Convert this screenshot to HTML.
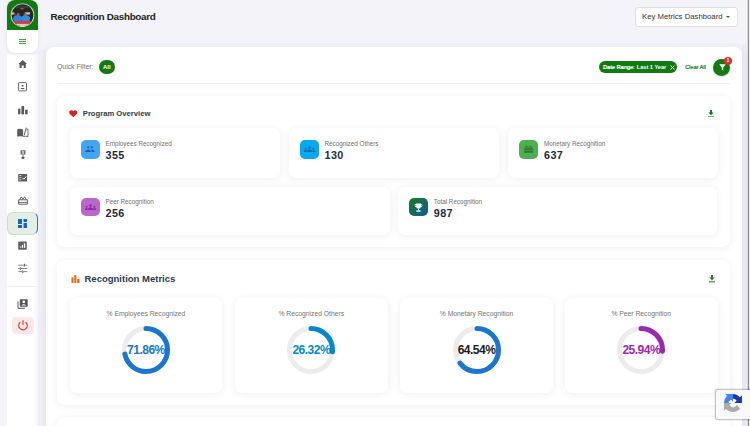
<!DOCTYPE html>
<html><head><meta charset="utf-8">
<style>
*{box-sizing:border-box;margin:0;padding:0}
html,body{width:750px;height:426px;overflow:hidden;background:#f3f3f9;font-family:"Liberation Sans",sans-serif;position:relative}
.a{position:absolute}
.t{position:absolute;white-space:nowrap;line-height:1}
.card{position:absolute;background:#fff;border-radius:8px;box-shadow:0 1px 8px rgba(0,0,0,.07)}
.sc{position:absolute;background:#fff;border-radius:7px;box-shadow:0 1px 8px rgba(0,0,0,.075)}
.ib{position:absolute;width:18.8px;height:18.8px;border-radius:5px;left:11.3px}
.lbl{position:absolute;left:36px;font-size:6.3px;color:#6e6e6e;white-space:nowrap;line-height:1}
.val{position:absolute;left:36px;letter-spacing:.4px;font-size:10.8px;font-weight:700;color:#1f2b3b;white-space:nowrap;line-height:1}
.dc{position:absolute;top:297.7px;width:152.5px;height:95px;background:#fff;border-radius:7px;box-shadow:0 1px 8px rgba(0,0,0,.075)}
.dt{position:absolute;left:0;right:0;top:311px;text-align:center;font-size:6.75px;color:#737373;white-space:nowrap;line-height:1}
.pct{position:absolute;left:0;right:0;text-align:center;letter-spacing:-.5px;font-size:12px;font-weight:700;line-height:1;white-space:nowrap}
.si{position:absolute;left:17px;width:12px;height:12px}
</style></head><body>

<!-- right edge strip -->
<div class="a" style="left:742px;top:44px;width:6px;height:382px;background:#eeedf4"></div>
<div class="a" style="left:747px;top:0;width:1px;height:426px;background:#dcdce2"></div>
<div class="a" style="left:748px;top:0;width:1px;height:426px;background:#8d8d8d"></div>
<div class="a" style="left:749px;top:0;width:1px;height:426px;background:#ebebef"></div>

<!-- header -->
<div class="t" style="left:50.5px;top:11.6px;font-size:9.9px;letter-spacing:-.3px;font-weight:700;color:#222">Recognition Dashboard</div>
<div class="a" style="left:634.9px;top:7px;width:102.8px;height:19.5px;background:#fff;border:1px solid #dedee3;border-radius:3px"></div>
<div class="t" style="left:642px;top:13.2px;font-size:7.75px;color:#333">Key Metrics Dashboard</div>
<div class="a" style="left:726.3px;top:15.8px;width:0;height:0;border-left:2.6px solid transparent;border-right:2.6px solid transparent;border-top:2.9px solid #555"></div>

<!-- sidebar strip shadow -->
<div class="a" style="left:37.5px;top:50px;width:8.5px;height:380px;background:#efeef5"></div>

<!-- sidebar column -->
<div class="a" style="left:7.4px;top:53.5px;width:30.4px;height:380px;background:#fff;box-shadow:inset -3px 0 3px rgba(0,0,0,.035)"></div>

<!-- logo block -->
<div class="a" style="left:7.4px;top:0px;width:30.5px;height:52.5px;background:#fff;border-radius:8px;overflow:hidden;box-shadow:0 1px 4px rgba(0,0,0,.08)">
  <div class="a" style="left:0;top:0;width:31px;height:29.5px;background:#117a11"></div>
</div>
<svg class="a" style="left:10px;top:3px" width="25" height="25" viewBox="0 0 25 25">
  <defs><clipPath id="lc"><circle cx="12.5" cy="12.2" r="10.9"/></clipPath></defs>
  <circle cx="12.5" cy="12.2" r="11.8" fill="#e2e2e2"/>
  <g clip-path="url(#lc)">
    <rect x="0" y="0" width="25" height="25" fill="#262626"/>
    <rect x="3" y="3" width="19" height="2.2" fill="#3a3a3a"/>
    <rect x="10.5" y="5.3" width="3" height="0.9" fill="#a09040"/>
    <rect x="1" y="9.5" width="3.5" height="2.2" fill="#d0d0d0"/>
    <rect x="15" y="9.3" width="5" height="2.2" fill="#c4c4c4"/>
    <rect x="3.5" y="10.5" width="2" height="1.5" fill="#b83030"/>
    <ellipse cx="7.6" cy="15.6" rx="4.6" ry="3.6" fill="#2a86dc"/>
    <ellipse cx="15.6" cy="15.6" rx="4.6" ry="3.6" fill="#2f8ee0"/>
    <circle cx="8.1" cy="11.4" r="1.4" fill="#8a6655"/>
    <circle cx="15.1" cy="11.4" r="1.4" fill="#8a6655"/>
    <rect x="0" y="18" width="25" height="2.8" fill="#e03838"/>
    <rect x="0" y="20.8" width="25" height="4.5" fill="#eec4c4"/>
  </g>
</svg>
<div class="a" style="left:19px;top:38.6px;width:7px;height:1.15px;background:#43a047"></div>
<div class="a" style="left:19px;top:40.8px;width:7px;height:1.15px;background:#43a047"></div>
<div class="a" style="left:19px;top:43px;width:7px;height:1.15px;background:#43a047"></div>

<!-- sidebar icons -->
<svg class="a" style="left:12px;top:56px" width="22" height="38" viewBox="0 0 22 38">
  <path d="M10.7 4L6.3 8.1H7.6V12H9.7V9.6H11.7V12H13.8V8.1H15.1Z" fill="#595959"/>
  <rect x="6.6" y="26.6" width="7.9" height="8.3" rx="0.7" fill="none" stroke="#5e5e5e" stroke-width="0.95"/>
  <circle cx="10.55" cy="29.8" r="1.05" fill="#5e5e5e"/>
  <rect x="8.8" y="32" width="3.5" height="1.1" fill="#5e5e5e"/>
</svg>

<svg class="a" style="left:17.8px;top:105.5px" width="10" height="9" viewBox="0 0 10 9"><rect x="0.1" y="2.7" width="2.3" height="5.6" fill="#585858"/><rect x="3.4" y="0.1" width="2.7" height="8.2" fill="#585858"/><rect x="7.1" y="3.7" width="2.5" height="4.6" fill="#585858"/></svg>
<svg class="a" style="left:12px;top:124px" width="22" height="38" viewBox="0 0 22 38">
  <path d="M5.2 5.2Q8 4.4 11.1 5.4V12.6Q8 11.8 5.2 12.6Z" fill="#5a5a5a"/>
  <path d="M11.2 12.5Q13.6 11.9 16 12.5V5.3H15" fill="none" stroke="#5a5a5a" stroke-width="0.9"/>
  <path d="M11.6 11.6L13.9 3.6L14.9 3.9L12.6 11.3Z" fill="#5a5a5a"/>
  <rect x="8.6" y="26.3" width="4.8" height="4.2" fill="#5a5a5a"/>
  <rect x="9.9" y="26.8" width="0.7" height="3.5" fill="#fff"/>
  <rect x="11.4" y="26.8" width="0.7" height="3.5" fill="#fff"/>
  <path d="M11 30.5V32" stroke="#5a5a5a" stroke-width="0.8"/>
  <path d="M11 31.6L11.7 32.9L13.1 33L12.1 34L12.4 35.4L11 34.7L9.6 35.4L9.9 34L8.9 33L10.3 32.9Z" fill="#5a5a5a"/>
</svg>

<svg class="a" style="left:12px;top:170px" width="22" height="38" viewBox="0 0 22 38">
  <rect x="6.2" y="4" width="8.9" height="7.6" rx="0.5" fill="#5e5e5e"/>
  <rect x="7.5" y="5.2" width="1.7" height="0.8" fill="#fff"/>
  <rect x="7.5" y="7.3" width="1.7" height="0.8" fill="#fff"/>
  <rect x="7.5" y="9.4" width="1.7" height="0.8" fill="#fff"/>
  <path d="M10.6 7.9L11.9 9.2L14.1 6.5" fill="none" stroke="#fff" stroke-width="1"/>
  <path d="M6.6 29.8V34.2H15.4V29.8Z" fill="none" stroke="#5e5e5e" stroke-width="0.95"/>
  <path d="M6.6 32.4H15.4" stroke="#5e5e5e" stroke-width="0.9"/>
  <path d="M7.6 29.8L9.3 26.8L11 29.2L12.7 26.8L14.4 29.8" fill="none" stroke="#5e5e5e" stroke-width="0.9"/>
</svg>


<!-- active -->
<div class="a" style="left:7.2px;top:212.2px;width:30.6px;height:22.6px;background:#e4eee3;border:1px solid #c9e0c7;border-right:1.8px solid #1976d2;border-radius:6px"></div>
<svg class="a" style="left:17.5px;top:219px" width="9.5" height="9" viewBox="0 0 9.5 9"><rect x="0" y="0" width="4" height="5" fill="#1565c0"/><rect x="5.5" y="0" width="4" height="3" fill="#1565c0"/><rect x="0" y="6" width="4" height="3" fill="#1565c0"/><rect x="5.5" y="4" width="4" height="5" fill="#1565c0"/></svg>

<svg class="a" style="left:12px;top:238px" width="22" height="38" viewBox="0 0 22 38">
  <rect x="6.2" y="3.6" width="8.6" height="8.1" rx="0.6" fill="#626262"/>
  <rect x="8.2" y="8.3" width="1.1" height="1.5" fill="#fff"/>
  <rect x="10" y="6.9" width="1.1" height="2.9" fill="#fff"/>
  <rect x="11.9" y="5.3" width="1.3" height="4.5" fill="#fff"/>
  <g stroke="#5e5e5e" stroke-width="0.75">
    <path d="M6.2 27.2H11.7M13.2 27.2H15.2M6.2 30.5H7.6M9 30.5H15.2M6.2 33.6H10.1M11.6 33.6H15.2"/>
  </g>
  <g stroke="#5e5e5e" stroke-width="1">
    <path d="M12.45 25.8V28.6M8.3 29.1V31.9M10.85 32.2V35"/>
  </g>
</svg>

<div class="a" style="left:7px;top:286px;width:30.8px;height:1px;background:#f0f0f3"></div>
<svg class="a" style="left:16.8px;top:299.3px" width="11" height="10" viewBox="0 0 11 10"><path d="M1 2.5V9.3H8" fill="none" stroke="#555" stroke-width="1"/><rect x="2.8" y="0.3" width="7.9" height="7.4" rx="0.6" fill="#555"/><circle cx="6.75" cy="2.8" r="1.4" fill="#fff"/><path d="M4.2 6.6Q6.75 3.8 9.3 6.6Z" fill="#fff"/></svg>
<div class="a" style="left:11.8px;top:316.6px;width:22px;height:17px;background:#fde8e8;border-radius:4px"></div>
<svg class="a" style="left:16.6px;top:318.6px" width="12" height="12" viewBox="0 0 12 12"><path d="M3.3 3.2A4.3 4.3 0 1 0 8.7 3.2" fill="none" stroke="#d93a3a" stroke-width="1.15"/><path d="M6 1.2V6" stroke="#d93a3a" stroke-width="1.15"/></svg>

<!-- main card -->
<div class="card" style="left:46px;top:47px;width:695.5px;height:400px;box-shadow:0 0 8px rgba(40,40,80,.07)"></div>

<!-- quick filter -->
<div class="t" style="left:57px;top:63.7px;font-size:6.85px;color:#707070">Quick Filter:</div>
<div class="a" style="left:99px;top:59.8px;width:15.5px;height:14px;border-radius:7px;background:#117a11"></div>
<div class="t" style="left:99px;width:15.5px;text-align:center;top:64.6px;font-size:5.9px;font-weight:700;color:#fff">All</div>

<div class="a" style="left:599px;top:61px;width:77.7px;height:11.8px;border-radius:6px;background:#117a11"></div>
<div class="t" style="left:603px;top:64.9px;font-size:5.65px;color:#fff;text-shadow:.25px 0 0 #fff">Date Range:</div>
<div class="t" style="left:636.8px;top:64.9px;font-size:5.6px;font-weight:700;color:#fff">Last 1 Year</div>
<svg class="a" style="left:669.5px;top:64.5px" width="5" height="5" viewBox="0 0 5 5"><path d="M0.5 0.5L4.5 4.5M4.5 0.5L0.5 4.5" stroke="#fff" stroke-width="0.9"/></svg>
<div class="t" style="left:685px;top:64.9px;font-size:5.6px;color:#2e7d32;text-shadow:.25px 0 0 #2e7d32">Clear All</div>
<div class="a" style="left:713.3px;top:58.5px;width:17px;height:17px;border-radius:50%;background:#117a11;box-shadow:0 1px 2px rgba(0,0,0,.2)"></div>
<svg class="a" style="left:718.5px;top:64px" width="7" height="7" viewBox="0 0 7 7"><path d="M0.2 0.3H6.8L4.2 3.4V6.5L2.8 5.7V3.4Z" fill="#fff"/></svg>
<div class="a" style="left:723.8px;top:56.8px;width:8.4px;height:8.4px;border-radius:50%;background:#dc2c2c"></div>
<div class="t" style="left:723.8px;width:8.4px;text-align:center;top:58.4px;font-size:5.3px;font-weight:700;color:#fff">1</div>
<div class="a" style="left:57px;top:83px;width:673px;height:1px;background:#eeeeee"></div>

<!-- program overview -->
<div class="card" style="left:57.3px;top:95.5px;width:672.7px;height:151.5px"></div>
<svg class="a" style="left:69.2px;top:110.2px" width="8.6" height="7.4" viewBox="0 0 8.6 7.4"><path d="M4.3 7.3L0.9 4.1C-0.3 2.9 0.1 0.4 2.2 0.2C3.2 0.1 3.9 0.6 4.3 1.3C4.7 0.6 5.4 0.1 6.4 0.2C8.5 0.4 8.9 2.9 7.7 4.1Z" fill="#d82222"/></svg>
<div class="t" style="left:82.8px;top:109.7px;font-size:7.65px;font-weight:700;color:#2b3a4d">Program Overview</div>
<svg class="a" style="left:708.3px;top:109.8px" width="6" height="7.4" viewBox="0 0 6 7.4"><path d="M2 0H4V2.5H5.8L3 5.3L0.2 2.5H2Z" fill="#1e7b1e"/><rect x="0" y="6.4" width="6" height="1" fill="#1e7b1e"/></svg>

<!-- stat cards -->
<div class="sc" style="left:69.5px;top:128.2px;width:210.5px;height:49.8px">
  <div class="ib" style="top:11.8px;background:#42a5f5"></div>
  <svg class="a" style="left:11.4px;top:12.1px" width="19" height="19" viewBox="0 0 19 19"><g fill="#1c62a8"><circle cx="7.2" cy="7.3" r="1.15"/><circle cx="10.8" cy="7.3" r="1.15"/><path d="M4.1 11.9Q4.4 9.6 7.2 9.4Q10 9.6 10.3 11.9Z"/><path d="M9.6 9.6Q10.2 9.4 10.8 9.4Q13.4 9.6 13.9 11.9H10.9Q10.7 10.4 9.6 9.6Z"/></g></svg>
  <div class="lbl" style="top:13px">Employees Recognized</div>
  <div class="val" style="top:21.9px">355</div>
</div>
<div class="sc" style="left:288.5px;top:128.2px;width:210.5px;height:49.8px">
  <div class="ib" style="top:11.8px;background:#03a9f4"></div>
  <svg class="a" style="left:11px;top:11.8px" width="19" height="19" viewBox="0 0 19 19"><g fill="#1a6a9c"><circle cx="9.5" cy="7.4" r="1.25"/><circle cx="5.6" cy="8.8" r="0.95"/><circle cx="13.4" cy="8.8" r="0.95"/><path d="M6.8 11.9Q7 9.4 9.5 9.2Q12 9.4 12.2 11.9Z"/><path d="M3.7 11.9Q3.9 10.2 5.6 10.1Q6.3 10.1 6.8 10.5L6.5 11.9Z"/><path d="M15.3 11.9Q15.1 10.2 13.4 10.1Q12.7 10.1 12.2 10.5L12.5 11.9Z"/></g></svg>
  <div class="lbl" style="top:13px">Recognized Others</div>
  <div class="val" style="top:21.9px">130</div>
</div>
<div class="sc" style="left:508px;top:128.2px;width:209.5px;height:49.8px">
  <div class="ib" style="top:11.8px;background:#4caf50"></div>
  <svg class="a" style="left:11px;top:11.8px" width="19" height="19" viewBox="0 0 19 19"><g fill="#2e7d32"><path d="M5.2 8.1H14.1V12.9H5.2Z"/><path d="M5.8 8.1L7.6 5.3L9.65 7.6L11.7 5.3L13.5 8.1H12.3L11.7 6.9L9.65 8.1L7.6 6.9L7 8.1Z"/></g><rect x="5.2" y="9.8" width="8.9" height="0.6" fill="#4caf50"/></svg>
  <div class="lbl" style="top:13px">Monetary Recognition</div>
  <div class="val" style="top:21.9px">637</div>
</div>
<div class="sc" style="left:69.5px;top:186.5px;width:320px;height:48.5px">
  <div class="ib" style="top:11.2px;background:#ba68c8"></div>
  <svg class="a" style="left:11px;top:11.2px" width="19" height="19" viewBox="0 0 19 19"><g fill="#8e24aa"><circle cx="9.5" cy="7.4" r="1.25"/><circle cx="5.6" cy="8.8" r="0.95"/><circle cx="13.4" cy="8.8" r="0.95"/><path d="M6.8 11.9Q7 9.4 9.5 9.2Q12 9.4 12.2 11.9Z"/><path d="M3.7 11.9Q3.9 10.2 5.6 10.1Q6.3 10.1 6.8 10.5L6.5 11.9Z"/><path d="M15.3 11.9Q15.1 10.2 13.4 10.1Q12.7 10.1 12.2 10.5L12.5 11.9Z"/></g></svg>
  <div class="lbl" style="top:12.3px">Peer Recognition</div>
  <div class="val" style="top:21.3px">256</div>
</div>
<div class="sc" style="left:397.8px;top:186.5px;width:319.7px;height:48.5px">
  <div class="ib" style="top:11.2px;background:linear-gradient(135deg,#1b7e1b,#0d5aa0)"></div>
  <svg class="a" style="left:11.5px;top:11.2px" width="19" height="19" viewBox="0 0 19 19"><g fill="#fff"><path d="M7 5.6H12V8.3Q12 10.6 9.5 10.8Q7 10.6 7 8.3Z"/><path d="M7 6.3H5.7V7.5Q5.8 9.1 7.3 9.3V8.5Q6.5 8.3 6.4 7.4V7H7Z"/><path d="M12 6.3H13.3V7.5Q13.2 9.1 11.7 9.3V8.5Q12.5 8.3 12.6 7.4V7H12Z"/><rect x="9" y="10.6" width="1" height="1.7"/><rect x="7.3" y="12.4" width="4.4" height="1.3"/></g></svg>
  <div class="lbl" style="top:12.3px">Total Recognition</div>
  <div class="val" style="top:21.3px">987</div>
</div>

<!-- recognition metrics -->
<div class="card" style="left:57.3px;top:260px;width:672.7px;height:144.7px"></div>
<svg class="a" style="left:70.5px;top:275px" width="9" height="8" viewBox="0 0 9 8"><rect x="0.5" y="2.3" width="2" height="5.7" fill="#f06a0a"/><rect x="3.3" y="0" width="2.1" height="8" fill="#f06a0a"/><rect x="6.3" y="4" width="2.1" height="4" fill="#e85a0a"/></svg>
<div class="t" style="left:84.5px;top:273.7px;font-size:9.5px;font-weight:700;color:#2b3a4d">Recognition Metrics</div>
<svg class="a" style="left:708.5px;top:275.2px" width="6" height="7.4" viewBox="0 0 6 7.4"><path d="M2 0H4V2.5H5.8L3 5.3L0.2 2.5H2Z" fill="#1e7b1e"/><rect x="0" y="6.4" width="6" height="1" fill="#1e7b1e"/></svg>

<div class="dc" style="left:69.7px"></div>
<div class="dc" style="left:235px"></div>
<div class="dc" style="left:400.3px"></div>
<div class="dc" style="left:565px"></div>

<div class="a" style="left:69.7px;width:152.5px;top:0;height:426px">
  <div class="dt">% Employees Recognized</div>
  <svg class="a" style="left:50.25px;top:324.3px" width="52" height="52" viewBox="0 0 52 52"><circle cx="26" cy="26" r="21.5" fill="none" stroke="#ececec" stroke-width="5"/><circle cx="26" cy="26" r="21.5" fill="none" stroke="#1976d2" stroke-width="5" stroke-linecap="round" pathLength="100" stroke-dasharray="71.86 100" transform="rotate(-90 26 26)"/></svg>
  <div class="pct" style="top:343.9px;color:#1976d2">71.86%</div>
</div>
<div class="a" style="left:235px;width:152.5px;top:0;height:426px">
  <div class="dt">% Recognized Others</div>
  <svg class="a" style="left:50.25px;top:324.3px" width="52" height="52" viewBox="0 0 52 52"><circle cx="26" cy="26" r="21.5" fill="none" stroke="#ececec" stroke-width="5"/><circle cx="26" cy="26" r="21.5" fill="none" stroke="#0288d1" stroke-width="5" stroke-linecap="round" pathLength="100" stroke-dasharray="26.32 100" transform="rotate(-90 26 26)"/></svg>
  <div class="pct" style="top:343.9px;color:#0288d1">26.32%</div>
</div>
<div class="a" style="left:400.3px;width:152.5px;top:0;height:426px">
  <div class="dt">% Monetary Recognition</div>
  <svg class="a" style="left:50.25px;top:324.3px" width="52" height="52" viewBox="0 0 52 52"><circle cx="26" cy="26" r="21.5" fill="none" stroke="#ececec" stroke-width="5"/><circle cx="26" cy="26" r="21.5" fill="none" stroke="#1976d2" stroke-width="5" stroke-linecap="round" pathLength="100" stroke-dasharray="64.54 100" transform="rotate(-90 26 26)"/></svg>
  <div class="pct" style="top:343.9px;color:#212121">64.54%</div>
</div>
<div class="a" style="left:565px;width:152.5px;top:0;height:426px">
  <div class="dt">% Peer Recognition</div>
  <svg class="a" style="left:50.25px;top:324.3px" width="52" height="52" viewBox="0 0 52 52"><circle cx="26" cy="26" r="21.5" fill="none" stroke="#ececec" stroke-width="5"/><circle cx="26" cy="26" r="21.5" fill="none" stroke="#9c27b0" stroke-width="5" stroke-linecap="round" pathLength="100" stroke-dasharray="25.94 100" transform="rotate(-90 26 26)"/></svg>
  <div class="pct" style="top:343.9px;color:#9c27b0">25.94%</div>
</div>

<!-- next card -->
<div class="card" style="left:57.3px;top:416.7px;width:672.7px;height:60px"></div>

<!-- recaptcha -->
<div class="a" style="left:715.8px;top:390.3px;width:40px;height:29px;background:#f9f9f9;box-shadow:0 0 1.5px 0.3px rgba(0,0,0,.28);border-radius:2px"></div>
<svg class="a" style="left:724.2px;top:394px" width="18" height="18" viewBox="0 0 64 64">
<path d="M64 31.955l-.033-1.37V4.687l-7.16 7.16C50.948 4.674 42.033.093 32.05.093c-10.4 0-19.622 4.96-25.458 12.64l11.736 11.86a15.55 15.55 0 0 1 4.754-5.334c2.05-1.6 4.952-2.906 8.968-2.906.485 0 .86.057 1.135.163 4.976.393 9.288 3.14 11.828 7.124l-8.307 8.307L64 31.953" fill="#1c3aa9"/>
<path d="M31.862.094l-1.37.033H4.594l7.16 7.16C4.58 13.147 0 22.06 0 32.046c0 10.4 4.96 19.622 12.64 25.458L24.5 45.768a15.55 15.55 0 0 1-5.334-4.754c-1.6-2.05-2.906-4.952-2.906-8.968 0-.485.057-.86.163-1.135.393-4.976 3.14-9.288 7.124-11.828l8.307 8.307L31.86.095" fill="#4285f4"/>
<path d="M.001 32.045l.033 1.37v25.898l7.16-7.16c5.86 7.173 14.774 11.754 24.76 11.754 10.4 0 19.622-4.96 25.458-12.64L45.677 39.407a15.55 15.55 0 0 1-4.754 5.334c-2.05 1.6-4.952 2.906-8.968 2.906-.485 0-.86-.057-1.135-.163-4.976-.393-9.288-3.14-11.828-7.124l8.307-8.307c-10.523.04-22.4.066-27.3-.001" fill="#ababab"/>
</svg>
</body></html>
